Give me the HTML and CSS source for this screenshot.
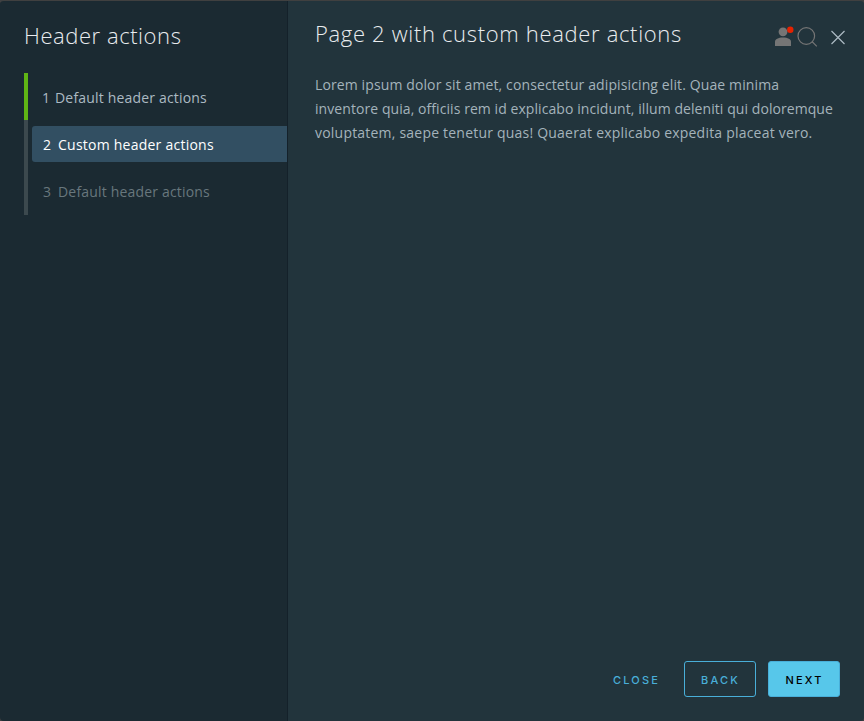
FILE: index.html
```html
<!DOCTYPE html>
<html lang="en">
<head>
<meta charset="utf-8">
<title>Header actions</title>
<link rel="stylesheet" href="styles.css">
</head>
<body>
<div class="wizard">
  <aside class="sidebar">
    <h1 class="wizard-title">Header actions</h1>
    <ol class="steps">
      <li class="step complete"><button class="step-link"><span class="num">1</span><span class="label">Default header actions</span></button></li>
      <li class="step active"><button class="step-link"><span class="num">2</span><span class="label">Custom header actions</span></button></li>
      <li class="step disabled"><button class="step-link"><span class="num">3</span><span class="label">Default header actions</span></button></li>
    </ol>
  </aside>
  <main class="page">
    <header class="page-header">
      <h2 class="page-title">Page 2 with custom header actions</h2>
      <div class="actions">
        <svg class="icon user" viewBox="0 0 24 24"><circle cx="12" cy="8.8" r="4.4"/><path d="M4 23v-4.200c0-2.700 3.200-4.300 8-4.300s8 1.600 8 4.300V23z"/><circle class="badge" cx="19.300" cy="6.700" r="3.200"/></svg>
        <svg class="icon search" viewBox="0 0 24 24"><circle cx="11.300" cy="13" r="8.300"/><path d="M17 18.500l4.800 4.800"/></svg>
        <svg class="icon close" viewBox="0 0 24 24"><path d="M5.500 8l13 13M18.500 8l-13 13"/></svg>
      </div>
    </header>
    <p class="content"><span class="l1">Lorem ipsum dolor sit amet, consectetur adipisicing elit. Quae minima</span><br><span class="l2">inventore quia, officiis rem id explicabo incidunt, illum deleniti qui doloremque</span><br><span class="l3">voluptatem, saepe tenetur quas! Quaerat explicabo expedita placeat vero.</span></p>
    <footer class="footer">
      <button class="btn link">CLOSE</button>
      <button class="btn outline">BACK</button>
      <button class="btn primary">NEXT</button>
    </footer>
  </main>
</div>
</body>
</html>
```
FILE: styles.css
```css
* { box-sizing: border-box; }
body { margin: 0; background: #3f4042; font-family: "Open Sans", "Noto Sans", sans-serif; }
.wizard { display: flex; height: 721px; border-top: 1px solid #404040; border-radius: 4px; overflow: hidden; }
.sidebar { width: 288px; padding: 17px 0 0 24px; background: #1b2a32; border-right: 1px solid #14212a; }
h1, h2, p, ol { margin: 0; padding: 0; font-weight: 300; }
.wizard-title { font-size: 22px; line-height: 34px; letter-spacing: 0.560px; color: #e9ecef; white-space: nowrap; }
.steps { list-style: none; margin-top: 21px; }
.step { display: flex; align-items: center; height: 47px; border-left: 4px solid #3c494e; padding-left: 4px; }
.step:last-child { height: 48px; }
.complete { border-color: #60b515; }
.step-link { display: flex; align-items: center; width: 100%; height: 36px; padding: 0 0 0 11px; border: 0; border-radius: 3px 0 0 3px; background: none; color: #acbac3; font: 400 14px "Open Sans", sans-serif; letter-spacing: 0.180px; text-align: left; white-space: nowrap; }
.num { width: 15px; flex: none; }
.complete .num { width: 13px; margin-left: -1px; }
.complete .step-link { padding-top: 1px; }
.active .step-link { background: #324f62; color: #fff; font-weight: 500; letter-spacing: 0.240px; padding-top: 1px; }
.disabled .step-link { color: #68777d; padding-top: 1px; }
.page { display: flex; flex-direction: column; flex: 1; background: #22343c; padding: 16px 24px 24px 27px; }
.page-header { display: flex; justify-content: space-between; align-items: flex-start; height: 56px; margin-right: -10px; }
.page-title { font-size: 22px; line-height: 32px; letter-spacing: 0.670px; color: #e9ecef; white-space: nowrap; }
.actions { display: flex; padding-top: 6px; }
.icon { width: 24px; height: 24px; fill: none; stroke: #757575; stroke-width: 1.200; }
.user { fill: #757575; stroke: none; }
.badge { fill: #e62200; }
.close { stroke: #acbac3; margin-left: 7px; }
.content { font-size: 14px; font-weight: 400; line-height: 24px; color: #a4b3bb; white-space: nowrap; }
.l1 { letter-spacing: 0.115px; }
.l2 { letter-spacing: 0.070px; }
.l3 { letter-spacing: 0.210px; }
.footer { display: flex; justify-content: flex-end; gap: 12px; margin-top: auto; }
.btn { width: 72px; height: 36px; padding: 1px 0 0 1px; border: 1px solid transparent; border-radius: 3px; background: none; color: #49afd9; font: 500 11px Inter, sans-serif; letter-spacing: 2.150px; white-space: nowrap; }
.outline { border-color: #49afd9; }
.primary { background: #57c7ea; border-color: #49afd9; color: #000; }
```
